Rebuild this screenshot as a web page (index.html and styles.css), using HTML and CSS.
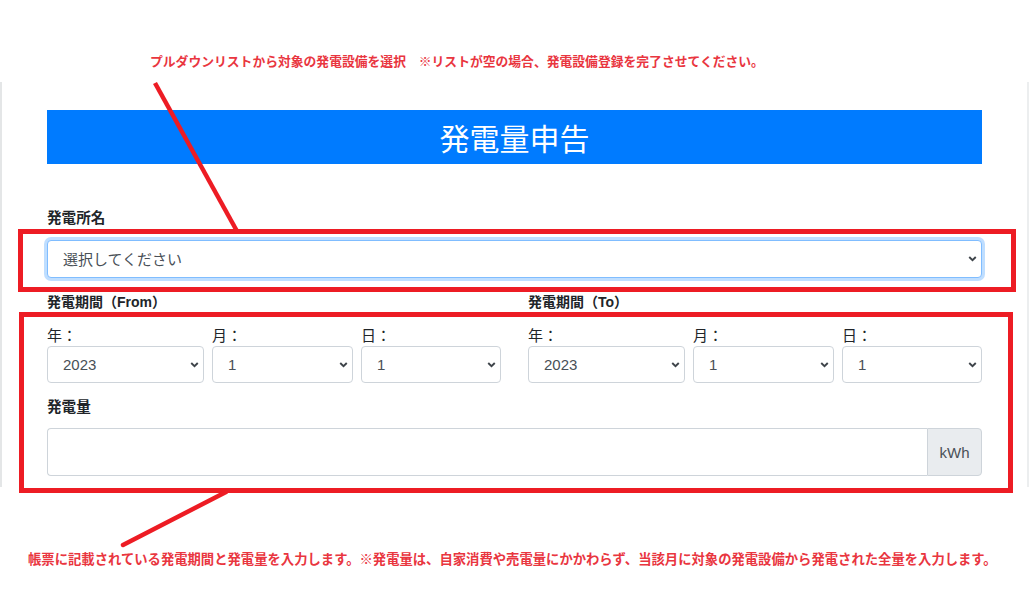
FILE: index.html
```html
<!DOCTYPE html>
<html lang="ja">
<head>
<meta charset="utf-8">
<title>発電量申告</title>
<link rel="stylesheet" href="styles.css">
</head>
<body>
<div class="page">
  <p class="note note-top">プルダウンリストから対象の発電設備を選択　※リストが空の場合、発電設備登録を完了させてください。</p>

  <main class="frame">
    <h1 class="title">発電量申告</h1>

    <div class="field">
      <label class="label-bold" for="plant">発電所名</label>
      <span class="select-wrap">
        <select id="plant" class="control control-focus"><option>選択してください</option></select>
        <svg class="chev" viewBox="0 0 10 7" aria-hidden="true"><path d="M1.2 1.2 5 5 8.8 1.2" fill="none" stroke="#3d4349" stroke-width="2.2"/></svg>
      </span>
    </div>

    <div class="period-row">
      <div class="period">
        <div class="label-bold period-label">発電期間（From）</div>
        <div class="date-grid">
          <div class="date-col">
            <label class="label-small">年：</label>
            <span class="select-wrap">
              <select class="control date"><option>2023</option></select>
              <svg class="chev" viewBox="0 0 10 7" aria-hidden="true"><path d="M1.2 1.2 5 5 8.8 1.2" fill="none" stroke="#3d4349" stroke-width="2.2"/></svg>
            </span>
          </div>
          <div class="date-col">
            <label class="label-small">月：</label>
            <span class="select-wrap">
              <select class="control date"><option>1</option></select>
              <svg class="chev" viewBox="0 0 10 7" aria-hidden="true"><path d="M1.2 1.2 5 5 8.8 1.2" fill="none" stroke="#3d4349" stroke-width="2.2"/></svg>
            </span>
          </div>
          <div class="date-col">
            <label class="label-small">日：</label>
            <span class="select-wrap">
              <select class="control date"><option>1</option></select>
              <svg class="chev" viewBox="0 0 10 7" aria-hidden="true"><path d="M1.2 1.2 5 5 8.8 1.2" fill="none" stroke="#3d4349" stroke-width="2.2"/></svg>
            </span>
          </div>
        </div>
      </div>
      <div class="period">
        <div class="label-bold period-label">発電期間（To）</div>
        <div class="date-grid">
          <div class="date-col">
            <label class="label-small">年：</label>
            <span class="select-wrap">
              <select class="control date"><option>2023</option></select>
              <svg class="chev" viewBox="0 0 10 7" aria-hidden="true"><path d="M1.2 1.2 5 5 8.8 1.2" fill="none" stroke="#3d4349" stroke-width="2.2"/></svg>
            </span>
          </div>
          <div class="date-col">
            <label class="label-small">月：</label>
            <span class="select-wrap">
              <select class="control date"><option>1</option></select>
              <svg class="chev" viewBox="0 0 10 7" aria-hidden="true"><path d="M1.2 1.2 5 5 8.8 1.2" fill="none" stroke="#3d4349" stroke-width="2.2"/></svg>
            </span>
          </div>
          <div class="date-col">
            <label class="label-small">日：</label>
            <span class="select-wrap">
              <select class="control date"><option>1</option></select>
              <svg class="chev" viewBox="0 0 10 7" aria-hidden="true"><path d="M1.2 1.2 5 5 8.8 1.2" fill="none" stroke="#3d4349" stroke-width="2.2"/></svg>
            </span>
          </div>
        </div>
      </div>
    </div>

    <div class="field amount">
      <label class="label-bold" for="amount">発電量</label>
      <div class="input-group">
        <input id="amount" class="amount-input" type="text">
        <span class="addon">kWh</span>
      </div>
    </div>
  </main>

  <p class="note note-bottom">帳票に記載されている発電期間と発電量を入力します。※発電量は、自家消費や売電量にかかわらず、当該月に対象の発電設備から発電された全量を入力します。</p>

  <div class="mark mark-1"></div>
  <div class="mark mark-2"></div>
  <svg class="arrows" viewBox="0 0 1029 607" aria-hidden="true">
    <line x1="155" y1="83" x2="238" y2="233" stroke="#ed1c24" stroke-width="4.5"/>
    <line x1="226" y1="492" x2="123" y2="545" stroke="#ed1c24" stroke-width="4.5" stroke-linecap="round"/>
  </svg>
</div>
</body>
</html>
```

FILE: styles.css
```css
* { box-sizing: border-box; }

html, body {
  margin: 0;
  padding: 0;
  background: #ffffff;
}

body {
  font-family: "Segoe UI", "Liberation Sans", "Noto Sans CJK JP", sans-serif;
  color: #212529;
}

.page {
  position: relative;
  width: 1029px;
  height: 607px;
  overflow: hidden;
}

.note {
  margin: 0;
  font-family: "Noto Sans CJK JP", sans-serif;
  font-weight: 700;
  color: #e9363f;
  line-height: 16px;
  white-space: nowrap;
}

.note-top {
  height: 82px;
  padding: 53px 0 0 150px;
  font-size: 12.8px;
}

.note-bottom {
  margin-top: 64px;
  padding-left: 28px;
  font-size: 13.33px;
}

.frame {
  width: 1029px;
  border-left: 2px solid #e4e6e7;
  border-right: 2px solid #eceeef;
  padding: 28px 45px 11px 45px;
}

.title {
  margin: 0 0 44px;
  height: 54px;
  line-height: 54px;
  background: #007bff;
  color: #ffffff;
  text-align: center;
  font-family: "Noto Sans CJK JP", sans-serif;
  font-size: 30px;
  font-weight: 400;
}

.label-bold {
  display: block;
  font-family: "Segoe UI", "Liberation Sans", "Noto Sans CJK JP", sans-serif;
  font-size: 14px;
  line-height: 21px;
  font-weight: 700;
  color: #212529;
}

.field > .label-bold {
  margin-bottom: 11px;
  font-size: 14.6px;
}

.select-wrap {
  position: relative;
  display: block;
}

.control {
  display: block;
  width: 100%;
  -webkit-appearance: none;
  appearance: none;
  background: #ffffff;
  border: 1px solid #ced4da;
  border-radius: 4px;
  color: #495057;
  font-family: "Liberation Sans", "Noto Sans CJK JP", sans-serif;
  font-size: 15px;
  padding: 0 24px 0 15px;
  outline: none;
  margin: 0;
}

.control-focus {
  height: 38px;
  border-color: #80bdff;
  box-shadow: 0 0 0 3px rgba(0, 123, 255, 0.25);
}

.chev {
  position: absolute;
  right: 5px;
  top: 50%;
  width: 9px;
  height: 6px;
  margin-top: -3px;
  pointer-events: none;
}

.period-row {
  display: grid;
  grid-template-columns: 454px 454px;
  column-gap: 27px;
  margin-top: 14px;
}

.period-label {
  margin-bottom: 11px;
}

.date-grid {
  display: grid;
  grid-template-columns: 157px 141px 140px;
  column-gap: 8px;
}

.label-small {
  display: block;
  font-family: "Noto Sans CJK JP", sans-serif;
  font-size: 15px;
  line-height: 22px;
  color: #212529;
}

.date {
  height: 37px;
}

.amount {
  margin-top: 14px;
}

.amount > .label-bold {
  margin-bottom: 10px;
}

.input-group {
  display: flex;
  height: 48px;
}

.amount-input {
  flex: 1 1 auto;
  min-width: 0;
  height: 48px;
  border: 1px solid #ced4da;
  border-right: none;
  border-radius: 4px 0 0 4px;
  outline: none;
  padding: 0 12px;
  font-size: 16px;
}

.addon {
  flex: 0 0 55px;
  display: flex;
  align-items: center;
  justify-content: center;
  background: #e9ecef;
  border: 1px solid #ced4da;
  border-radius: 0 4px 4px 0;
  color: #495057;
  font-family: "Liberation Sans", sans-serif;
  font-size: 15px;
}

.mark {
  position: absolute;
  border: 5px solid #ed1c24;
  pointer-events: none;
}

.mark-1 {
  left: 18px;
  top: 229px;
  width: 998px;
  height: 63px;
}

.mark-2 {
  left: 19px;
  top: 312px;
  width: 994px;
  height: 181px;
}

.arrows {
  position: absolute;
  left: 0;
  top: 0;
  width: 1029px;
  height: 607px;
  pointer-events: none;
}
```
